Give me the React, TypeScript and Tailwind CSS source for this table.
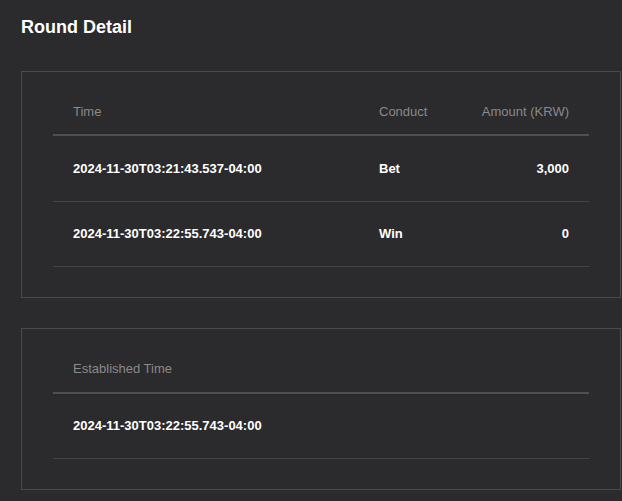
import React from "react";

const rows = [
  { time: "2024-11-30T03:21:43.537-04:00", conduct: "Bet", amount: "3,000" },
  { time: "2024-11-30T03:22:55.743-04:00", conduct: "Win", amount: "0" },
];

const App: React.FC = () => {
  return (
    <div
      className="min-h-[501px] w-full bg-[#2b2a2c] pb-[12px] text-white"
      style={{ fontFamily: '"Liberation Sans", Arial, sans-serif' }}
    >
      <h2 className="pl-[21px] pt-[14px] text-[18px] font-bold leading-[26px]">Round Detail</h2>

      {/* rounds */}
      <div className="ml-[21px] mt-[31px] w-[600px] border border-[#4a494b] px-[31px] pb-[30px] pt-[16px]">
        <table className="w-full table-fixed border-collapse text-[13px]">
          <colgroup>
            <col className="w-[306px]" />
            <col className="w-[100px]" />
            <col />
          </colgroup>
          <thead>
            <tr className="h-[47px] border-b-2 border-[#4f4e50] text-[#8a898b]">
              <th className="px-5 pt-px text-left font-normal">Time</th>
              <th className="px-5 pt-px text-left font-normal">Conduct</th>
              <th className="px-5 pt-px text-right font-normal">Amount (KRW)</th>
            </tr>
          </thead>
          <tbody>
            {rows.map((r, i) => (
              <tr
                key={r.time}
                className={`${i === 0 ? "h-[66px]" : "h-[65px]"} border-b border-[#454446] font-bold`}
              >
                <td className="px-5">{r.time}</td>
                <td className="px-5">{r.conduct}</td>
                <td className="px-5 text-right">{r.amount}</td>
              </tr>
            ))}
          </tbody>
        </table>
      </div>

      {/* established */}
      <div className="ml-[21px] mt-[30px] w-[600px] border border-[#4a494b] px-[31px] pb-[30px] pt-[16px]">
        <table className="w-full border-collapse text-[13px]">
          <thead>
            <tr className="h-[48px] border-b-2 border-[#4f4e50] text-[#8a898b]">
              <th className="px-5 pt-px text-left font-normal">Established Time</th>
            </tr>
          </thead>
          <tbody>
            <tr className="h-[66px] border-b border-[#454446] font-bold">
              <td className="px-5">2024-11-30T03:22:55.743-04:00</td>
            </tr>
          </tbody>
        </table>
      </div>
    </div>
  );
};

export default App;
